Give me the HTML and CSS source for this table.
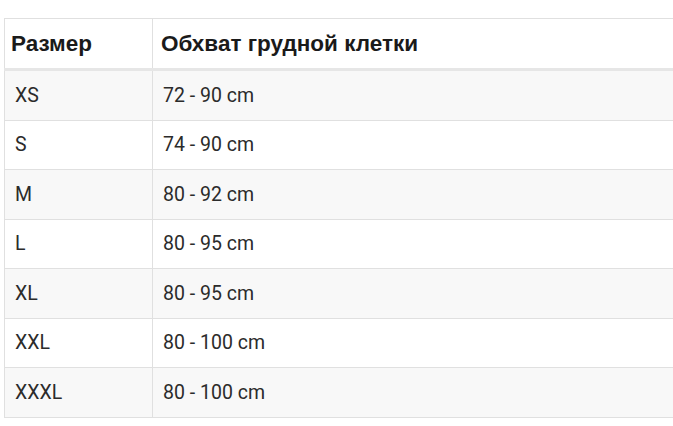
FILE: index.html
```html
<!DOCTYPE html>
<html lang="ru">
<head>
<meta charset="utf-8">
<link rel="stylesheet" href="styles.css">
</head>
<body>
<div class="wrap">
<table class="size-table">
  <thead>
    <tr><th>Размер</th><th>Обхват грудной клетки</th></tr>
  </thead>
  <tbody>
    <tr><td>XS</td><td>72 - 90 cm</td></tr>
    <tr><td>S</td><td>74 - 90 cm</td></tr>
    <tr><td>M</td><td>80 - 92 cm</td></tr>
    <tr><td>L</td><td>80 - 95 cm</td></tr>
    <tr><td>XL</td><td>80 - 95 cm</td></tr>
    <tr><td>XXL</td><td>80 - 100 cm</td></tr>
    <tr><td>XXXL</td><td>80 - 100 cm</td></tr>
  </tbody>
</table>
</div>
</body>
</html>
```
FILE: styles.css
```css
html, body {
  margin: 0;
  padding: 0;
  background: #fff;
  overflow: hidden;
}
.wrap {
  padding: 18px 0 0 4px;
  width: 700px;
}
.size-table {
  border-collapse: collapse;
  width: 700px;
  font-family: Roboto, "Liberation Sans", sans-serif;
  color: #222;
}
.size-table th,
.size-table td {
  border: 1px solid #e0e0e0;
  text-align: left;
  vertical-align: middle;
}
.size-table th {
  font-family: "Liberation Sans", Arial, sans-serif;
  font-weight: bold;
  font-size: 22.5px;
  color: #1a1a1a;
  height: 49px;
  padding: 0 8px;
  border-bottom: 3px solid #e6e6e6;
}
.size-table th:first-child {
  padding-left: 6px;
}
.size-table td {
  font-size: 19.5px;
  height: 48.5px;
  padding: 0 10px;
  color: #2b2b2b;
}
.size-table td:first-child,
.size-table th:first-child {
  width: 127px;
}
.size-table tbody tr:nth-child(odd) {
  background: #f8f8f8;
}
```
